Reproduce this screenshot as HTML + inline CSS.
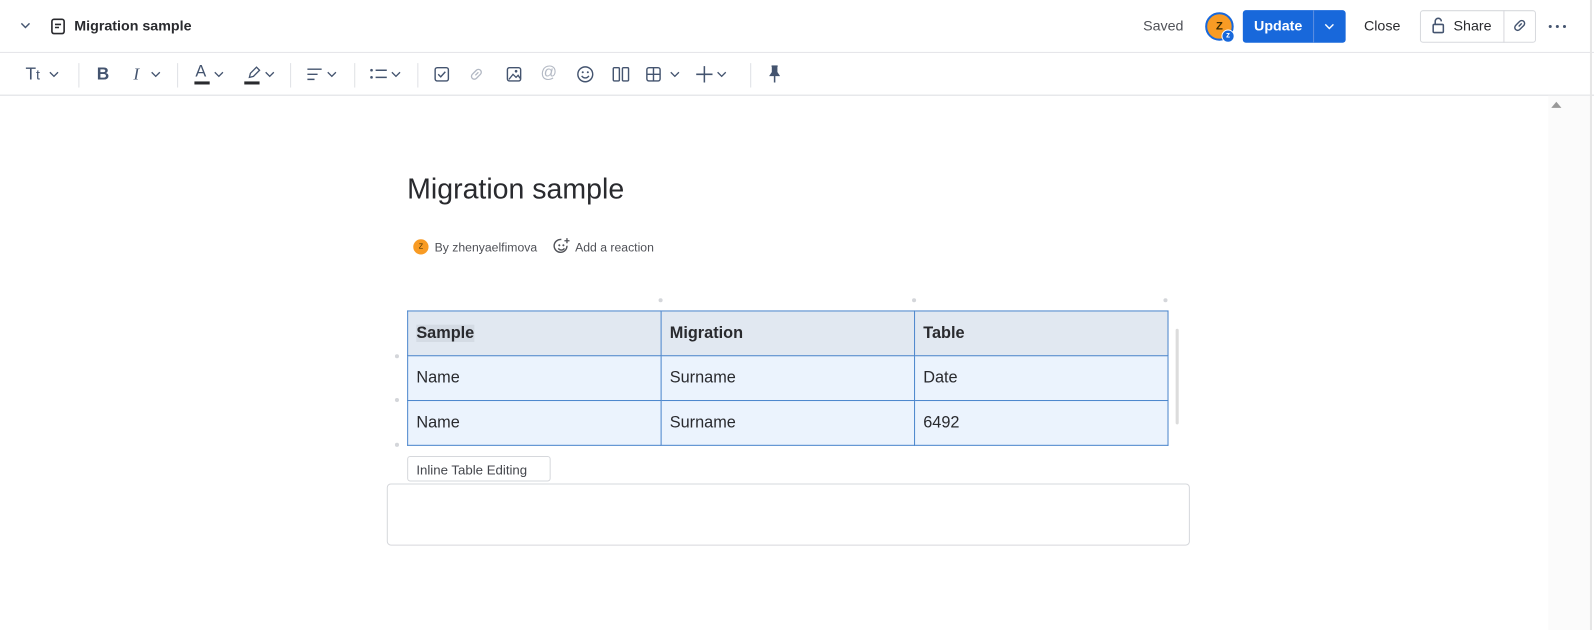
<!DOCTYPE html>
<html><head><meta charset="utf-8"><style>
*{box-sizing:border-box;margin:0;padding:0}
body{width:1594px;height:619px;overflow:hidden;background:#fff;font-family:"Liberation Sans",Arial,sans-serif;color:#172b4d;position:relative}
#w{position:absolute;left:0;top:0;width:1566px;height:609px;transform:scale(1.01788);transform-origin:0 0}
.a{position:absolute}
.top{left:0;top:0;width:1590px;height:52px;border-bottom:1px solid #e4e5e8}
.tb{left:0;top:52px;width:1590px;height:42px;border-bottom:1px solid #dcdee2}
.ic{position:absolute;top:64px}
.sep{position:absolute;top:62px;width:1px;height:24px;background:#dfe1e5}
svg{display:block}
table{border-collapse:collapse;position:absolute;left:400px;top:305px;width:748px}
td{border:1px solid #4a85cc;height:44px;padding:0 8px;font-size:16px;color:#292a2e;background:#ebf3fd;width:249px}
tr:first-child td{background:#e1e8f1;font-weight:bold}
.dot{position:absolute;width:4px;height:4px;border-radius:2px;background:#d4d6da}
</style></head><body><div id="w">
<div class="a top"></div>
<div class="a tb"></div>
<div class="a" style="left:1521px;top:94px;width:42px;height:525px;background:#fbfbfb"></div>
<div class="a" style="left:1562px;top:0;width:2px;height:619px;background:#e6e6e6"></div>
<div class="a" style="left:1524px;top:100px;width:0;height:0;border-left:5px solid transparent;border-right:5px solid transparent;border-bottom:6px solid #999"></div>

<svg class="a" style="left:19px;top:20px" width="12" height="10"><path d="M2 3l4 4 4-4" fill="none" stroke="#44546f" stroke-width="1.4"/></svg>
<svg class="a" style="left:49px;top:17px" width="16" height="18"><rect x="2" y="2" width="12" height="14" rx="2" fill="none" stroke="#292a2e" stroke-width="1.6"/><path d="M5 7h6M5 10h4" stroke="#292a2e" stroke-width="1.5"/></svg>
<div class="a" style="left:73px;top:17px;font-size:14px;font-weight:bold;color:#292a2e">Migration sample</div>

<div class="a" style="left:1123px;top:17px;font-size:14px;color:#505258">Saved</div>
<div class="a" style="left:1184px;top:12px;width:28px;height:28px;border-radius:50%;background:#f89b24;border:2px solid #1868db;font-size:11px;font-weight:bold;text-align:center;line-height:24px;color:#3a2a00">Z</div>
<div class="a" style="left:1200px;top:29px;width:13px;height:13px;border-radius:50%;background:#1868db;border:1.5px solid #fff;font-size:8px;color:#fff;text-align:center;line-height:10px;font-weight:bold">z</div>
<div class="a" style="left:1221px;top:10px;width:101px;height:32px;border-radius:3px;background:#1868db"></div>
<div class="a" style="left:1290px;top:10px;width:1px;height:32px;background:#5c8fe0"></div>
<div class="a" style="left:1232px;top:17px;font-size:14px;font-weight:bold;color:#fff">Update</div>
<svg class="a" style="left:1300px;top:21px" width="12" height="10"><path d="M2 3l4 4 4-4" fill="none" stroke="#fff" stroke-width="1.4"/></svg>
<div class="a" style="left:1340px;top:17px;font-size:14px;color:#292a2e">Close</div>
<div class="a" style="left:1395px;top:10px;width:114px;height:32px;border:1px solid #d7d9dd;border-radius:3px"></div>
<div class="a" style="left:1477px;top:10px;width:1px;height:32px;background:#d7d9dd"></div>
<svg class="a" style="left:1406px;top:16px" width="14" height="18"><rect x="2" y="8" width="10" height="8" rx="1" fill="none" stroke="#44546f" stroke-width="1.5"/><path d="M4 8V5a3 3 0 0 1 6 0" fill="none" stroke="#44546f" stroke-width="1.5"/></svg>
<div class="a" style="left:1428px;top:17px;font-size:14px;color:#292a2e">Share</div>
<svg class="a" style="left:1485px;top:17px" width="16" height="16"><path d="M7 9l3-3M6 6l2-2a2.5 2.5 0 0 1 4 4l-2 2M10 10l-2 2a2.5 2.5 0 0 1-4-4l2-2" fill="none" stroke="#44546f" stroke-width="1.4"/></svg>
<svg class="a" style="left:1521px;top:24px" width="18" height="4"><circle cx="2" cy="2" r="1.5" fill="#44546f"/><circle cx="9" cy="2" r="1.5" fill="#44546f"/><circle cx="16" cy="2" r="1.5" fill="#44546f"/></svg>

<!-- toolbar -->
<div class="a" style="left:25px;top:63px;font-size:17px;color:#44546f">T<span style="font-size:14px">t</span></div>
<svg class="ic" style="left:47px;top:68px" width="12" height="10"><path d="M2 3l4 4 4-4" fill="none" stroke="#44546f" stroke-width="1.3"/></svg>
<div class="sep" style="left:77px"></div>
<div class="a" style="left:95px;top:63px;font-size:17px;font-weight:bold;color:#44546f">B</div>
<div class="a" style="left:131px;top:63px;font-size:17px;font-style:italic;color:#44546f;font-family:'Liberation Serif',serif">I</div>
<svg class="ic" style="left:147px;top:68px" width="12" height="10"><path d="M2 3l4 4 4-4" fill="none" stroke="#44546f" stroke-width="1.3"/></svg>
<div class="sep" style="left:174px"></div>
<div class="a" style="left:192px;top:62px;font-size:16px;color:#44546f">A</div>
<div class="a" style="left:191px;top:80px;width:15px;height:3px;background:#292a2e"></div>
<svg class="ic" style="left:209px;top:68px" width="12" height="10"><path d="M2 3l4 4 4-4" fill="none" stroke="#44546f" stroke-width="1.3"/></svg>
<svg class="ic" style="left:241px;top:63px" width="16" height="16"><path d="M4 13l1-4 6-6 3 3-6 6z" fill="none" stroke="#44546f" stroke-width="1.3"/></svg>
<div class="a" style="left:240px;top:80px;width:15px;height:3px;background:#292a2e"></div>
<svg class="ic" style="left:259px;top:68px" width="12" height="10"><path d="M2 3l4 4 4-4" fill="none" stroke="#44546f" stroke-width="1.3"/></svg>
<div class="sep" style="left:285px"></div>
<svg class="ic" style="left:301px;top:65px" width="16" height="16"><path d="M1 3h14M1 8h10M1 13h7" stroke="#44546f" stroke-width="1.4"/></svg>
<svg class="ic" style="left:320px;top:68px" width="12" height="10"><path d="M2 3l4 4 4-4" fill="none" stroke="#44546f" stroke-width="1.3"/></svg>
<div class="sep" style="left:348px"></div>
<svg class="ic" style="left:363px;top:65px" width="18" height="16"><circle cx="2" cy="4" r="1.3" fill="#44546f"/><circle cx="2" cy="11" r="1.3" fill="#44546f"/><path d="M6 4h11M6 11h11" stroke="#44546f" stroke-width="1.4"/></svg>
<svg class="ic" style="left:383px;top:68px" width="12" height="10"><path d="M2 3l4 4 4-4" fill="none" stroke="#44546f" stroke-width="1.3"/></svg>
<div class="sep" style="left:410px"></div>
<svg class="ic" style="left:426px;top:65px" width="16" height="16"><rect x="1.5" y="1.5" width="13" height="13" rx="2" fill="none" stroke="#44546f" stroke-width="1.4"/><path d="M4.5 8l2.5 2.5 4.5-5" fill="none" stroke="#44546f" stroke-width="1.4"/></svg>
<svg class="ic" style="left:460px;top:65px" width="16" height="16"><path d="M7 9l3-3M6 6l2-2a2.5 2.5 0 0 1 4 4l-2 2M10 10l-2 2a2.5 2.5 0 0 1-4-4l2-2" fill="none" stroke="#b3b9c4" stroke-width="1.3"/></svg>
<svg class="ic" style="left:497px;top:65px" width="16" height="16"><rect x="1.5" y="1.5" width="13" height="13" rx="2" fill="none" stroke="#44546f" stroke-width="1.4"/><path d="M3 13l4-5 3 3 2-2 2 3" fill="none" stroke="#44546f" stroke-width="1.3"/><circle cx="10" cy="5" r="1.3" fill="#44546f"/></svg>
<div class="a" style="left:531px;top:63px;font-size:16px;color:#b3b9c4">@</div>
<svg class="ic" style="left:566px;top:64px" width="18" height="18"><circle cx="9" cy="9" r="7.3" fill="none" stroke="#44546f" stroke-width="1.4"/><circle cx="6.5" cy="7" r="1" fill="#44546f"/><circle cx="11.5" cy="7" r="1" fill="#44546f"/><path d="M5.5 10.5a4 4 0 0 0 7 0" fill="none" stroke="#44546f" stroke-width="1.4"/></svg>
<svg class="ic" style="left:601px;top:65px" width="18" height="16"><rect x="1.5" y="1.5" width="6" height="13" rx="1" fill="none" stroke="#44546f" stroke-width="1.4"/><rect x="10.5" y="1.5" width="6" height="13" rx="1" fill="none" stroke="#44546f" stroke-width="1.4"/></svg>
<svg class="ic" style="left:634px;top:65px" width="16" height="16"><rect x="1.5" y="1.5" width="13" height="13" rx="2" fill="none" stroke="#44546f" stroke-width="1.4"/><path d="M8 1.5v13M1.5 8h13" stroke="#44546f" stroke-width="1.4"/></svg>
<svg class="ic" style="left:657px;top:68px" width="12" height="10"><path d="M2 3l4 4 4-4" fill="none" stroke="#44546f" stroke-width="1.3"/></svg>
<svg class="ic" style="left:683px;top:64px" width="18" height="18"><path d="M9 1v16M1 9h16" stroke="#44546f" stroke-width="1.5"/></svg>
<svg class="ic" style="left:703px;top:68px" width="12" height="10"><path d="M2 3l4 4 4-4" fill="none" stroke="#44546f" stroke-width="1.3"/></svg>
<div class="sep" style="left:737px"></div>
<svg class="ic" style="left:753px;top:64px" width="16" height="18"><path d="M5 1h6M6 1v6l-2 3h8l-2-3V1M8 10v7" fill="#44546f" stroke="#44546f" stroke-width="1.5"/></svg>

<!-- content -->
<div class="a" style="left:400px;top:170px;font-size:28px;color:#292a2e">Migration sample</div>
<div class="a" style="left:406px;top:235px;width:15px;height:15px;border-radius:50%;background:#f89b24;font-size:7px;text-align:center;line-height:15px;color:#3a2a00">Z</div>
<div class="a" style="left:427px;top:236px;font-size:12px;color:#505258">By zhenyaelfimova</div>
<svg class="a" style="left:543px;top:233px" width="18" height="18"><path d="M14 8.5a6.3 6.3 0 1 1-5.5-6.2" fill="none" stroke="#505258" stroke-width="1.4"/><circle cx="6.5" cy="8" r="1" fill="#505258"/><circle cx="10.5" cy="8" r="1" fill="#505258"/><path d="M5.5 11a3.5 3.5 0 0 0 6 0M14 1v5M11.5 3.5h5" fill="none" stroke="#505258" stroke-width="1.3"/></svg>
<div class="a" style="left:565px;top:236px;font-size:12px;color:#505258">Add a reaction</div>

<div class="dot" style="left:647px;top:293px"></div>
<div class="dot" style="left:896px;top:293px"></div>
<div class="dot" style="left:1143px;top:293px"></div>
<div class="dot" style="left:388px;top:348px"></div>
<div class="dot" style="left:388px;top:391px"></div>
<div class="dot" style="left:388px;top:435px"></div>
<div class="a" style="left:1155px;top:323px;width:3px;height:94px;background:#dcdcdc;border-radius:2px"></div>
<table>
<tr><td><span style="background:#d4dbe4">Sample</span></td><td>Migration</td><td>Table</td></tr>
<tr><td>Name</td><td>Surname</td><td>Date</td></tr>
<tr><td>Name</td><td>Surname</td><td>6492</td></tr>
</table>
<div class="a" style="left:400px;top:448px;width:141px;height:25px;border:1px solid #d6d8dc;border-radius:3px;font-size:13px;color:#44464c;padding:5px 0 0 8px">Inline Table Editing</div>
<div class="a" style="left:380px;top:475px;width:789px;height:61px;border:1px solid #d6d8dc;border-radius:4px"></div>
</div></body></html>
